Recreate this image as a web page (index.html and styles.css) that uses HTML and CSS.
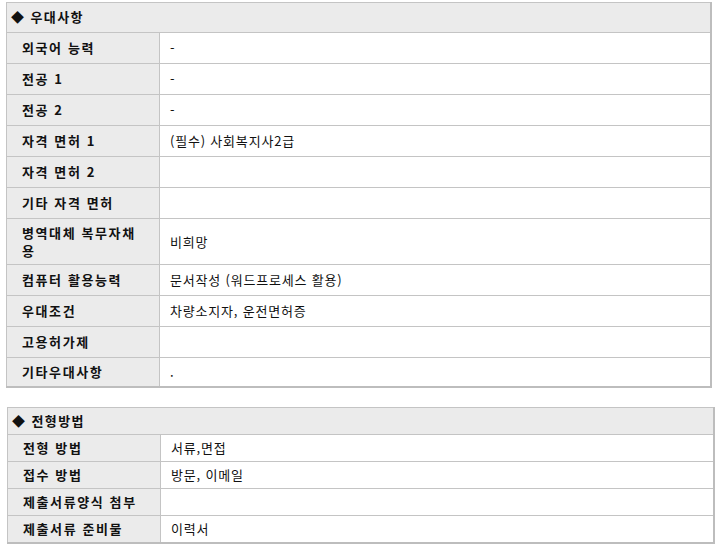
FILE: index.html
```html
<!DOCTYPE html>
<html lang="ko">
<head>
<meta charset="utf-8">
<link rel="stylesheet" href="styles.css">
</head>
<body>
<table class="info info-a">
  <colgroup><col class="c-lab"><col></colgroup>
  <tr class="head"><th colspan="2">◆ 우대사항</th></tr>
  <tr><td class="lab">외국어 능력</td><td class="val">-</td></tr>
  <tr><td class="lab">전공 1</td><td class="val">-</td></tr>
  <tr><td class="lab">전공 2</td><td class="val">-</td></tr>
  <tr><td class="lab">자격 면허 1</td><td class="val">(필수) 사회복지사2급</td></tr>
  <tr><td class="lab">자격 면허 2</td><td class="val"></td></tr>
  <tr><td class="lab">기타 자격 면허</td><td class="val"></td></tr>
  <tr class="tall"><td class="lab">병역대체 복무자채용</td><td class="val">비희망</td></tr>
  <tr><td class="lab">컴퓨터 활용능력</td><td class="val">문서작성 (워드프로세스 활용)</td></tr>
  <tr><td class="lab">우대조건</td><td class="val">차량소지자, 운전면허증</td></tr>
  <tr><td class="lab">고용허가제</td><td class="val"></td></tr>
  <tr class="last"><td class="lab">기타우대사항</td><td class="val">.</td></tr>
</table>
<table class="info info-b">
  <colgroup><col class="c-lab"><col></colgroup>
  <tr class="head"><th colspan="2">◆ 전형방법</th></tr>
  <tr><td class="lab">전형 방법</td><td class="val">서류,면접</td></tr>
  <tr><td class="lab">접수 방법</td><td class="val">방문, 이메일</td></tr>
  <tr><td class="lab">제출서류양식 첨부</td><td class="val"></td></tr>
  <tr><td class="lab">제출서류 준비물</td><td class="val">이력서</td></tr>
</table>
</body>
</html>
```
FILE: styles.css
```css
html, body {
  margin: 0;
  padding: 0;
  background: #ffffff;
}
body {
  font-family: "Noto Sans CJK KR", "Noto Sans", sans-serif;
  font-size: 13px;
  letter-spacing: 0.8px;
  color: #111;
}
.info {
  border-collapse: collapse;
  table-layout: fixed;
  border-right: 2px solid #bdbdbd;
  border-bottom: 2px solid #bdbdbd;
}
.c-lab {
  width: 153px;
}
.info th,
.info td {
  border: 1px solid #c4c4c4;
  line-height: 18px;
  vertical-align: middle;
  text-align: left;
  overflow: hidden;
}
.info-a {
  margin: 2px 0 0 6px;
  width: 706px;
}
.info-b {
  margin: 19px 0 0 7px;
  width: 708px;
}
.head th {
  background: #ebebeb;
  font-weight: bold;
  letter-spacing: 1.4px;
  padding: 5px 4px 6px 4px;
}
.lab {
  background: #ebebeb;
  font-weight: bold;
  letter-spacing: 1.6px;
  padding: 6px 14px 6px 15px;
  color: #111;
}
.val {
  background: #fff;
  padding: 6px 10px;
}
.tall td {
  padding-top: 5px;
  padding-bottom: 4px;
}
.last td {
  padding-top: 5px;
  padding-bottom: 5px;
}
.info-b .head th {
  padding: 4px 4px;
}
.info-b td {
  padding-top: 4px;
  padding-bottom: 4px;
}
```
